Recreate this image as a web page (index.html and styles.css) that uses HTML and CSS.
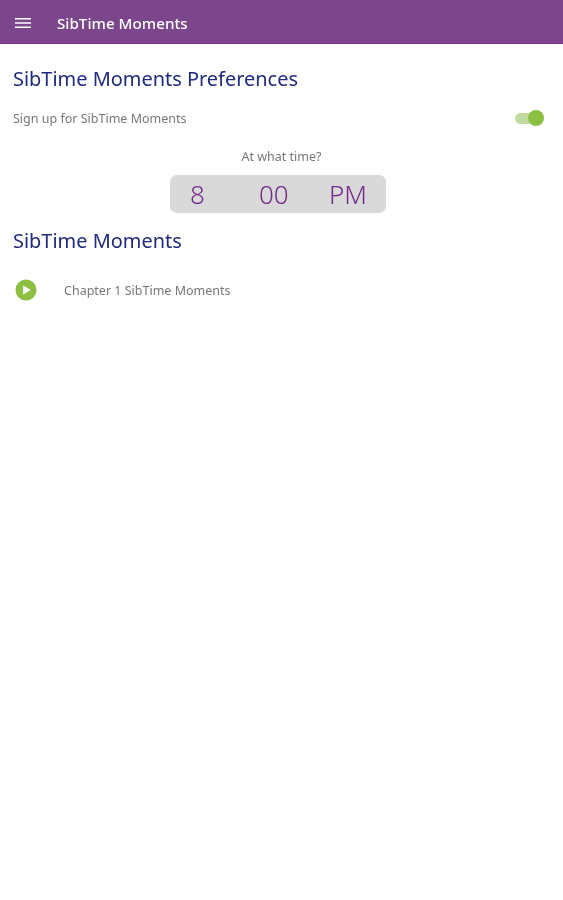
FILE: index.html
```html
<!DOCTYPE html>
<html lang="en">
<head>
<meta charset="utf-8">
<title>SibTime Moments</title>
<link rel="stylesheet" href="styles.css">
</head>
<body>
<header class="appbar">
  <svg class="menu-icon" viewBox="0 0 16 12" width="16" height="12" aria-hidden="true"><path d="M0 1h16v1.6H0zM0 5.2h16v1.6H0zM0 9.4h16V11H0z" fill="#fff"/></svg>
  <span class="appbar-title">SibTime Moments</span>
</header>
<main class="content">
  <h1 class="heading">SibTime Moments Preferences</h1>
  <div class="signup-row">
    <span class="body-text">Sign up for SibTime Moments</span>
    <span class="switch"><span class="switch-track"></span><span class="switch-thumb"></span></span>
  </div>
  <p class="time-label">At what time?</p>
  <div class="time-picker">
    <span class="time-hour">8</span>
    <span class="time-min">00</span>
    <span class="time-ampm">PM</span>
  </div>
  <h2 class="heading second">SibTime Moments</h2>
  <div class="chapter-row">
    <svg class="play-icon" viewBox="0 0 22 22" width="22" height="22" aria-hidden="true"><circle cx="11" cy="11" r="10.5" fill="#8cc043"/><path d="M8.2 6.6 15.8 11l-7.6 4.4z" fill="#fff"/></svg>
    <span class="body-text">Chapter 1 SibTime Moments</span>
  </div>
</main>
</body>
</html>
```
FILE: styles.css
```css
* { box-sizing: border-box; }
html, body { margin: 0; padding: 0; background: #fff; }
body { width: 563px; height: 900px; overflow: hidden; font-family: "Noto Sans", "Open Sans", sans-serif; }
.appbar { height: 44px; background: #7c468c; border-bottom: 1px solid #74358a; display: flex; align-items: center; padding: 2px 0 0 15px; filter: blur(0.35px); }
.menu-icon { flex: none; }
.appbar-title { margin-left: 26px; color: #fff; font-size: 15.2px; font-weight: 500; }
.content { display: flex; flex-direction: column; padding: 0 19px 0 13px; filter: blur(0.35px); }
.heading { margin: 0; font-size: 19.95px; font-weight: 400; line-height: 28px; color: #1f2a80; }
.content > .heading:first-child { margin-top: 21px; }
.second { margin-top: 14px; }
.signup-row { display: flex; justify-content: space-between; align-items: center; margin-top: 15px; height: 20px; }
.body-text { font-size: 12.5px; color: #777; }
.switch { position: relative; width: 29px; height: 18px; flex: none; }
.switch-track { position: absolute; left: 0; top: 3.5px; width: 27px; height: 11px; border-radius: 6px; background: #c3dba0; }
.switch-thumb { position: absolute; right: 0; top: 1px; width: 16px; height: 16px; border-radius: 50%; background: #8cc043; }
.time-label { margin: 20px 0 0; text-align: center; font-size: 12.5px; line-height: 18px; color: #777; padding-left: 6px; }
.time-picker { align-self: flex-start; margin: 9px 0 0 157px; width: 216px; height: 38px; border-radius: 7px; background: #d9d9d9; color: #74288a; font-size: 26px; font-weight: 300; display: flex; align-items: center; }
.time-hour { margin-left: 20px; width: 69px; }
.time-min { width: 70px; }
.time-ampm { flex: none; }
.chapter-row { display: flex; align-items: center; margin-top: 23px; height: 24px; margin-left: 2px; }
.chapter-row .body-text { margin-left: 27px; }
.play-icon { flex: none; }
```
